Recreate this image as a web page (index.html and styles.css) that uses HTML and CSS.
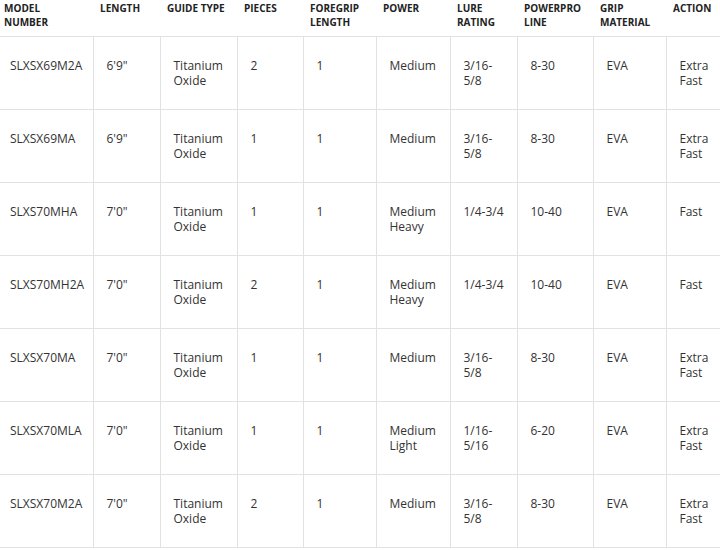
FILE: index.html
```html
<!DOCTYPE html>
<html lang="en">
<head>
<meta charset="utf-8">
<title>Rod Specifications</title>
<link rel="stylesheet" href="styles.css">
</head>
<body>
<div class="wrap">
<table class="specs">
  <colgroup>
    <col class="c1"><col class="c2"><col class="c3"><col class="c4"><col class="c5">
    <col class="c6"><col class="c7"><col class="c8"><col class="c9"><col class="c10">
  </colgroup>
  <thead>
    <tr>
      <th class="first">MODEL NUMBER</th>
      <th>LENGTH</th>
      <th>GUIDE TYPE</th>
      <th>PIECES</th>
      <th>FOREGRIP LENGTH</th>
      <th>POWER</th>
      <th>LURE RATING</th>
      <th>POWERPRO LINE</th>
      <th>GRIP MATERIAL</th>
      <th>ACTION</th>
    </tr>
  </thead>
  <tbody>
    <tr><td>SLXSX69M2A</td><td>6'9"</td><td>Titanium Oxide</td><td>2</td><td>1</td><td>Medium</td><td>3/16-5/8</td><td>8-30</td><td>EVA</td><td>Extra Fast</td></tr>
    <tr><td>SLXSX69MA</td><td>6'9"</td><td>Titanium Oxide</td><td>1</td><td>1</td><td>Medium</td><td>3/16-5/8</td><td>8-30</td><td>EVA</td><td>Extra Fast</td></tr>
    <tr><td>SLXS70MHA</td><td>7'0"</td><td>Titanium Oxide</td><td>1</td><td>1</td><td>Medium Heavy</td><td>1/4-3/4</td><td>10-40</td><td>EVA</td><td>Fast</td></tr>
    <tr><td>SLXS70MH2A</td><td>7'0"</td><td>Titanium Oxide</td><td>2</td><td>1</td><td>Medium Heavy</td><td>1/4-3/4</td><td>10-40</td><td>EVA</td><td>Fast</td></tr>
    <tr><td>SLXSX70MA</td><td>7'0"</td><td>Titanium Oxide</td><td>1</td><td>1</td><td>Medium</td><td>3/16-5/8</td><td>8-30</td><td>EVA</td><td>Extra Fast</td></tr>
    <tr><td>SLXSX70MLA</td><td>7'0"</td><td>Titanium Oxide</td><td>1</td><td>1</td><td>Medium Light</td><td>1/16-5/16</td><td>6-20</td><td>EVA</td><td>Extra Fast</td></tr>
    <tr><td>SLXSX70M2A</td><td>7'0"</td><td>Titanium Oxide</td><td>2</td><td>1</td><td>Medium</td><td>3/16-5/8</td><td>8-30</td><td>EVA</td><td>Extra Fast</td></tr>
  </tbody>
</table>
</div>
</body>
</html>
```
FILE: styles.css
```css
html, body {
  margin: 0;
  padding: 0;
  background: #ffffff;
}
body {
  overflow: hidden;
  font-family: "Open Sans", "DejaVu Sans", sans-serif;
}
.wrap {
  width: 720px;
  overflow: hidden;
}
.specs {
  border-collapse: collapse;
  table-layout: fixed;
  width: 789px;
  margin-left: -3px;
}
.c1 { width: 96px; }
.c2 { width: 67px; }
.c3 { width: 77px; }
.c4 { width: 66px; }
.c5 { width: 73px; }
.c6 { width: 74px; }
.c7 { width: 67px; }
.c8 { width: 76px; }
.c9 { width: 73px; }
.c10 { width: 120px; }
.specs th {
  text-align: left;
  vertical-align: top;
  font-size: 10px;
  font-weight: 700;
  line-height: 14px;
  color: #222222;
  padding: 1px 7px 0 7px;
  height: 36px;
  box-sizing: border-box;
  border-bottom: 1px solid #e2e2e2;
}
.specs th.first {
  padding-right: 14px;
}
.specs td {
  vertical-align: top;
  font-size: 12px;
  font-weight: 500;
  line-height: 15px;
  color: #333333;
  padding: 21px 9px 0 13px;
  height: 73px;
  box-sizing: border-box;
  border-bottom: 1px solid #e2e2e2;
  border-left: 1px solid #e2e2e2;
}
.specs td:first-child {
  border-left: none;
}
.specs td:last-child {
  padding-right: 66px;
}
```
